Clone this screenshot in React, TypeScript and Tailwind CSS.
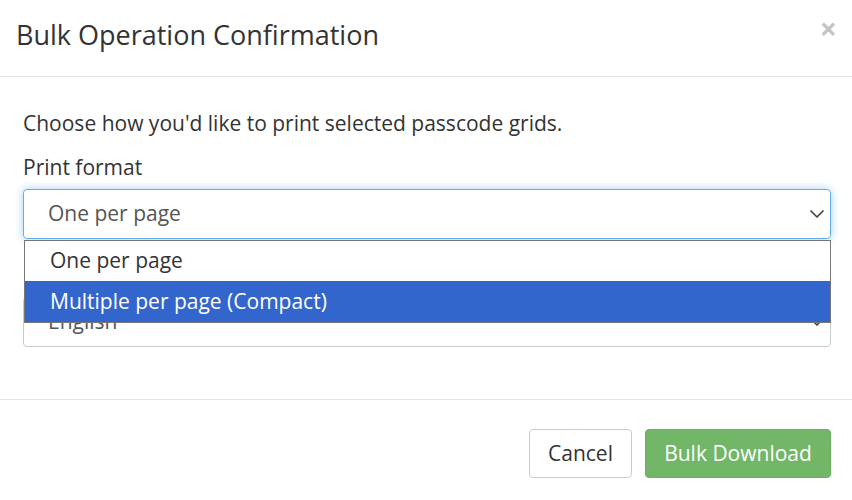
import { ChevronDown } from "lucide-react"

export default function App() {
  return (
    <div className="relative w-[852px] h-[500px] bg-white overflow-hidden text-[#333] font-['Open_Sans',sans-serif]">
      {/* Header */}
      <div className="flex items-center justify-between h-[77px] border-b border-[#e5e5e5] pl-4 pr-[15px]">
        <h4 className="text-[27px] leading-none text-[#333] -mt-[7px]">Bulk Operation Confirmation</h4>
        <button className="text-[#c4c4c4] text-[30px] font-bold leading-none -mt-[18px]">×</button>
      </div>

      {/* Body */}
      <div className="pl-[23px] pr-[21px] pt-[31px] pb-[52px] border-b border-[#e5e5e5]">
        <p className="text-[21px] leading-[30px] text-[#333]">Choose how you'd like to print selected passcode grids.</p>
        <label className="block mt-[14px] text-[21px] leading-[30px] text-[#333]">Print format</label>
        <div className="relative mt-[7px]">
          <div className="flex items-center justify-between h-[50px] rounded-[4px] border border-[#66afe9] shadow-[0_0_8px_rgba(102,175,233,0.6)] pl-6 pr-[1px]">
            <span className="text-[21px] text-[#555]">One per page</span>
            <ChevronDown className="w-6 h-6 text-[#444]" strokeWidth={1.75} />
          </div>
          {/* open dropdown list */}
          <div className="absolute left-[1px] right-0 top-[51px] z-10 bg-white border border-[#767676]">
            <div className="h-[40px] flex items-center pl-[25px] text-[21px] text-[#333]">One per page</div>
            <div className="h-[41px] flex items-center pl-[25px] text-[21px] text-white bg-[#3366cc]">Multiple per page (Compact)</div>
          </div>
        </div>
        <label className="block mt-[21px] text-[21px] leading-[30px] text-[#333]">Language</label>
        <div className="flex items-center justify-between mt-[7px] h-[50px] rounded-[4px] border border-[#ccc] pl-6 pr-[1px]">
          <span className="text-[21px] text-[#555]">English</span>
          <ChevronDown className="w-6 h-6 text-[#444]" strokeWidth={1.75} />
        </div>
      </div>

      {/* Footer */}
      <div className="flex justify-end gap-[13px] pt-[29px] pr-[21px]">
        <button className="h-[49px] w-[103px] rounded-[4px] border border-[#ccc] bg-white text-[21px] text-[#333]">Cancel</button>
        <button className="h-[49px] w-[186px] rounded-[4px] border border-[#6bb160] bg-[#72b668] text-[21px] text-white">Bulk Download</button>
      </div>
    </div>
  )
}
